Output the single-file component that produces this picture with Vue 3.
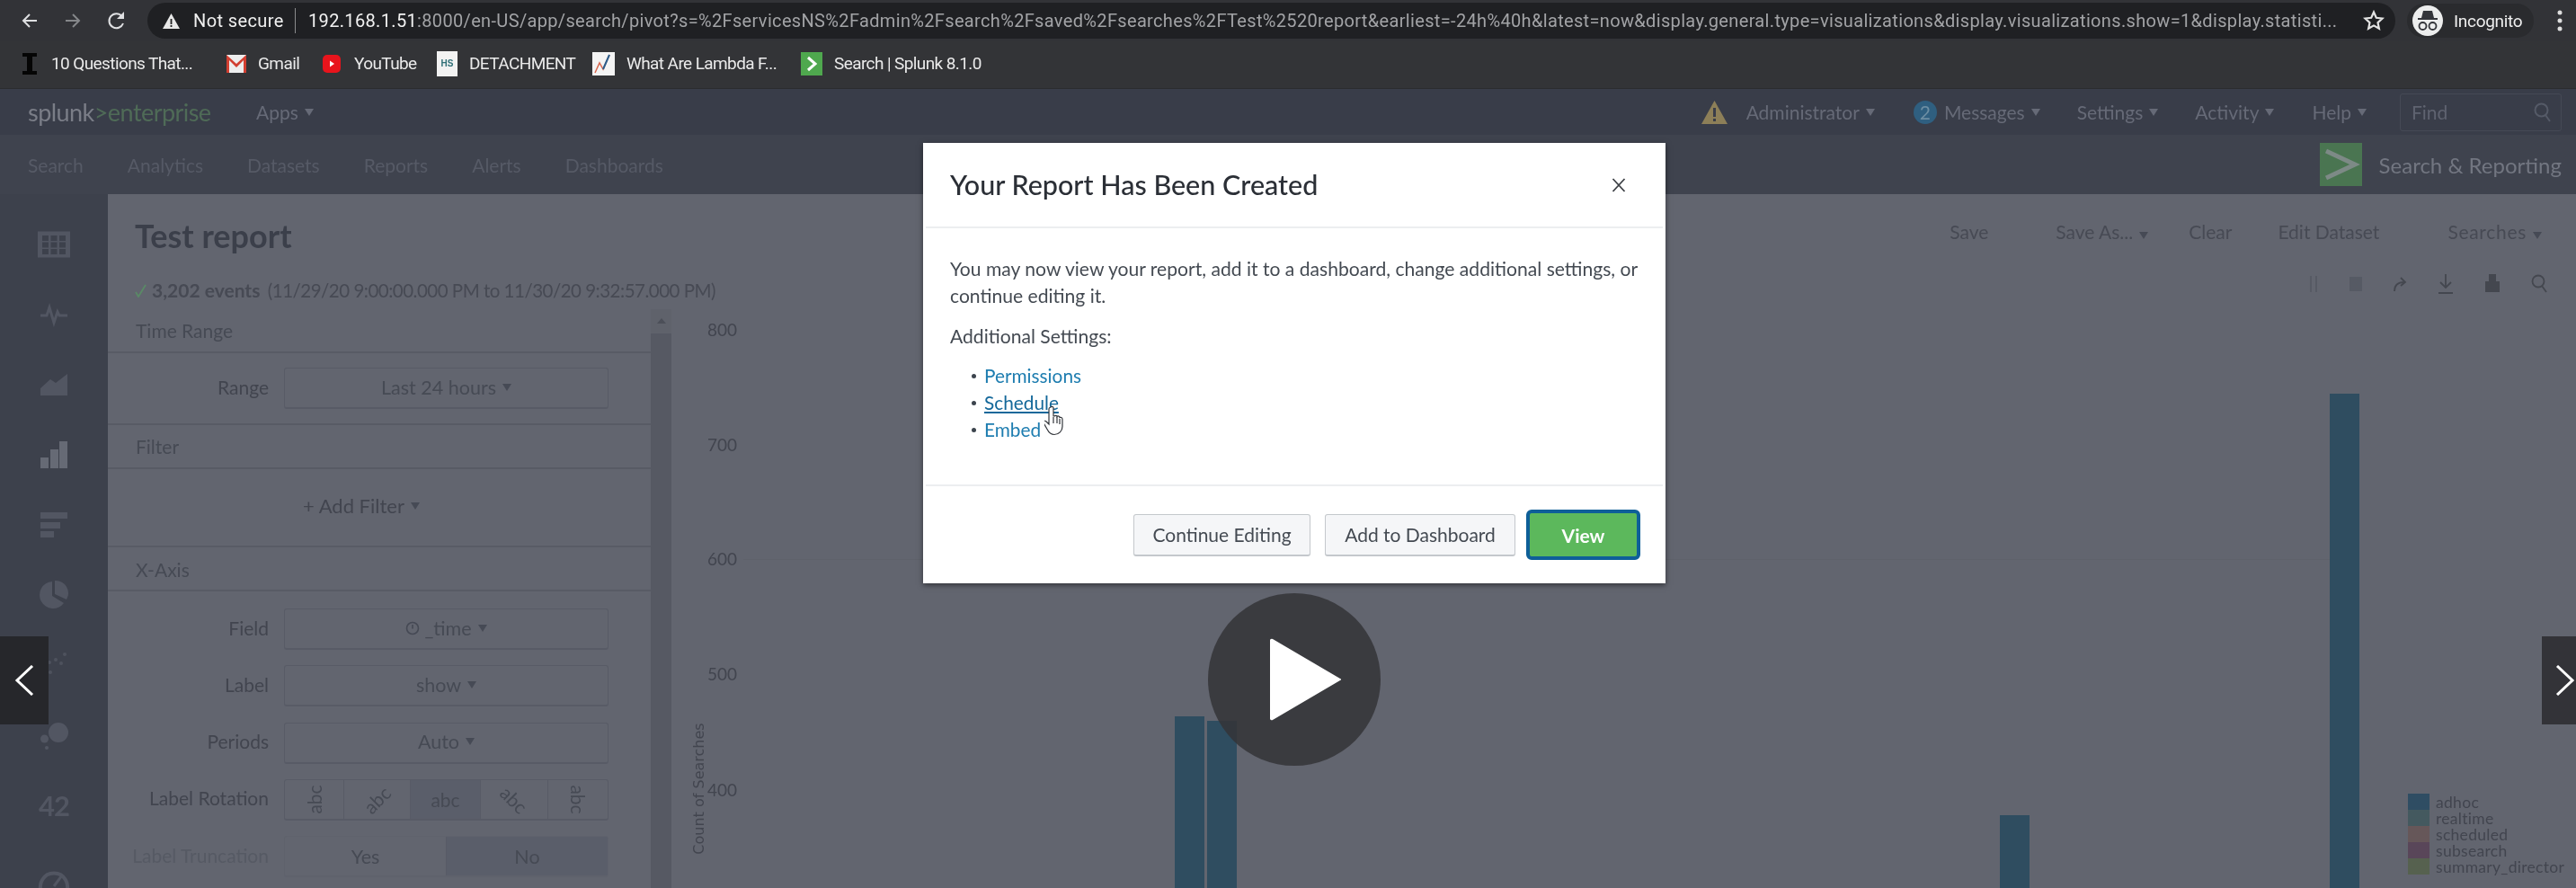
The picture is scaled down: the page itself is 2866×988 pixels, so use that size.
<template>
  <div class="screen">
    <header class="toolbar">
      <svg class="nav-ico" width="20" height="20" viewBox="0 0 20 20"><path d="M18 10H3M10 3l-7 7 7 7" fill="none" stroke="#dfe0e2" stroke-width="2"/></svg>
      <svg class="nav-ico fwd" width="20" height="20" viewBox="0 0 20 20"><path d="M2 10h15M10 3l7 7-7 7" fill="none" stroke="#85878a" stroke-width="2"/></svg>
      <svg class="nav-ico reload" width="22" height="24" viewBox="0 0 22 24"><path d="M18 15a8 8 0 1 1-1.5-8" fill="none" stroke="#dfe0e2" stroke-width="2"/><path d="M19 2v8h-8z" fill="#dfe0e2"/></svg>
      <div class="omnibox">
        <svg width="19" height="17" viewBox="0 0 19 17"><path d="M9.500 0L19 17H0z" fill="#e8e8e8"/><path d="M8.600 6h1.800v6H8.600zM8.600 13h1.800v2H8.600z" fill="#222"/></svg>
        <span class="secure">Not secure</span>
        <i class="omni-sep"></i>
        <span class="url"><b>192.168.1.51</b>:8000/en-US/app/search/pivot?s=%2FservicesNS%2Fadmin%2Fsearch%2Fsaved%2Fsearches%2FTest%2520report&amp;earliest=-24h%40h&amp;latest=now&amp;display.general.type=visualizations&amp;display.visualizations.show=1&amp;display.statisti...</span>
        <svg class="star" width="24" height="24" viewBox="0 0 24 24"><path d="M12 2.500l2.800 6.300 6.700.7-5 4.600 1.400 6.700-5.900-3.400-5.900 3.400 1.400-6.700-5-4.600 6.700-.7z" fill="none" stroke="#e4e4e4" stroke-width="2.200"/></svg>
      </div>
      <div class="incognito">
        <svg width="34" height="34" viewBox="0 0 34 34"><circle cx="17" cy="17" r="17" fill="#eceded"/><path d="M12 6h10l2 8H10zM6 14h22v2H6z" fill="#33353a"/><circle cx="11.500" cy="23" r="4" fill="none" stroke="#33353a" stroke-width="1.800"/><circle cx="22.500" cy="23" r="4" fill="none" stroke="#33353a" stroke-width="1.800"/></svg>
        <span>Incognito</span>
      </div>
      <svg class="dots" width="6" height="26" viewBox="0 0 6 26"><circle cx="3" cy="4" r="2.500" fill="#dedede"/><circle cx="3" cy="13" r="2.500" fill="#dedede"/><circle cx="3" cy="22" r="2.500" fill="#dedede"/></svg>
    </header>

    <nav class="bookmarks">
      <a class="bm" style="margin-left:25px">
        <svg width="16" height="24" viewBox="0 0 16 24"><path d="M0 0h16v4h-5v16h5v4H0v-4h5V4H0z" fill="#050505"/></svg>
        <span class="bm-t" style="width:157px">10 Questions That...</span>
      </a>
      <a class="bm" style="margin-left:38px">
        <svg width="22" height="20" viewBox="0 0 22 20"><rect width="22" height="20" fill="#eee"/><path d="M0 0l11 10L22 0v20h-3V6l-8 8-8-8v14H0z" fill="#d23f31"/></svg>
        <span class="bm-t" style="width:46px">Gmail</span>
      </a>
      <a class="bm" style="margin-left:26px">
        <svg width="20" height="22" viewBox="0 0 20 22"><rect y="1" width="20" height="20" rx="5" fill="#e8141c"/><path d="M8 7.500l5 3.500-5 3.500z" fill="#fff"/></svg>
        <span class="bm-t" style="width:69px;margin-left:2px">YouTube</span>
      </a>
      <a class="bm" style="margin-left:23px">
        <span class="hs">HS</span>
        <span class="bm-t" style="width:113px">DETACHMENT</span>
      </a>
      <a class="bm" style="margin-left:24px">
        <svg width="25" height="26" viewBox="0 0 25 26"><rect width="25" height="26" fill="#f4f4f4"/><path d="M3 23l5-11 4 7 7-16" fill="none" stroke="#d8674e" stroke-width="1.500"/><path d="M12 19l7-16" fill="none" stroke="#2a5d8c" stroke-width="2"/></svg>
        <span class="bm-t" style="width:170px">What Are Lambda F...</span>
      </a>
      <a class="bm" style="margin-left:24px">
        <svg width="24" height="26" viewBox="0 0 24 26"><rect width="24" height="26" fill="#4fa84e"/><path d="M8 6l8 7-8 7" fill="none" stroke="#fff" stroke-width="3"/></svg>
        <span class="bm-t" style="width:164px">Search | Splunk 8.1.0</span>
      </a>
    </nav>

    <div class="splunk-bar">
      <div class="logo">splunk<span>&gt;enterprise</span></div>
      <div class="menu apps">Apps<i class="caret"></i></div>
      <div class="bar-right">
        <svg width="29" height="26" viewBox="0 0 29 26"><path d="M14.500 0L29 26H0z" fill="#8d7f58"/><path d="M13 8h3v10h-3zM13 20h3v3h-3z" fill="#3a3d49"/></svg>
        <div class="menu" style="margin-left:21px">Administrator<i class="caret"></i></div>
        <span class="badge" style="margin-left:43px">2</span>
        <div class="menu" style="margin-left:8px">Messages<i class="caret"></i></div>
        <div class="menu" style="margin-left:41px">Settings<i class="caret"></i></div>
        <div class="menu" style="margin-left:41px">Activity<i class="caret"></i></div>
        <div class="menu" style="margin-left:42px">Help<i class="caret"></i></div>
        <div class="find">
          <span>Find</span>
          <svg width="20" height="22" viewBox="0 0 20 22"><circle cx="8.500" cy="8.500" r="7" fill="none" stroke="#555a67" stroke-width="2"/><path d="M13 14l5 7" stroke="#555a67" stroke-width="2"/></svg>
        </div>
      </div>
    </div>

    <div class="app-bar">
      <a v-for="item in appNav" :key="item">{{ item }}</a>
      <div class="app-name">
        <svg width="47" height="48" viewBox="0 0 47 48"><rect width="47" height="48" fill="#4a7551"/><path d="M7 9l32 15L7 39" fill="none" stroke="#7d8a86" stroke-width="5"/></svg>
        <span>Search &amp; Reporting</span>
      </div>
    </div>

    <div class="workspace">
      <aside class="viz-rail">
        <div class="viz-item" v-for="(ico, i) in railIcons" :key="i">
          <svg v-if="ico !== '42'" width="36" height="36" viewBox="0 0 36 36" v-html="ico"></svg>
          <span v-else class="forty-two">42</span>
        </div>
      </aside>

      <main class="page">
        <div class="page-head">
          <div class="title-row">
            <h1>Test report</h1>
            <div class="actions">
              <span style="width:44px">Save</span>
              <span style="margin-left:74px">Save As...<i class="caret dark"></i></span>
              <span style="margin-left:45px">Clear</span>
              <span style="margin-left:51px">Edit Dataset</span>
              <span class="searches">Searches<i class="caret dark"></i></span>
            </div>
          </div>
          <div class="status-row">
            <p class="status">
              <svg width="13" height="15" viewBox="0 0 13 15"><path d="M1 9l3 5 8-13" fill="none" stroke="#5a8a66" stroke-width="1.800"/></svg>
              <b>3,202 events</b> <span class="range">(11/29/20 9:00:00.000 PM to 11/30/20 9:32:57.000 PM)</span>
            </p>
            <div class="tools">
              <svg width="12" height="20" viewBox="0 0 12 20"><path d="M2 1h2v18H2zM8 1h2v18H8z" fill="#565a64"/></svg>
              <svg width="14" height="20" viewBox="0 0 14 20"><rect y="2" width="14" height="16" fill="#565a64"/></svg>
              <svg width="16" height="20" viewBox="0 0 16 20"><path d="M2 18c0-6 3-10 11-10M9 3l5 5-5 4" fill="none" stroke="#44474f" stroke-width="1.800"/></svg>
              <svg width="18" height="24" viewBox="0 0 18 24"><path d="M9 1v15M3 10l6 6 6-6M1 22h16" fill="none" stroke="#44474f" stroke-width="1.800"/></svg>
              <svg width="18" height="24" viewBox="0 0 18 24"><path d="M5 1h8v8h4v12H1V9h4z" fill="#44474f"/></svg>
              <svg width="18" height="24" viewBox="0 0 18 24"><circle cx="8" cy="9" r="6.500" fill="none" stroke="#44474f" stroke-width="1.800"/><path d="M12 14l5 7" stroke="#44474f" stroke-width="1.800"/></svg>
            </div>
          </div>
        </div>

        <div class="page-body">
          <section class="config">
            <h3>Time Range</h3>
            <div class="group g-range">
              <div class="frow"><label>Range</label><div class="ctl">Last 24 hours<i class="caret dark"></i></div></div>
            </div>
            <h3>Filter</h3>
            <div class="group g-filter"><span class="add">+ Add Filter<i class="caret dark"></i></span></div>
            <h3 class="axis-head">X-Axis</h3>
            <div class="group g-axis">
              <div class="frow">
                <label>Field</label>
                <div class="ctl">
                  <svg width="16" height="16" viewBox="0 0 16 16"><circle cx="8" cy="8" r="6.500" fill="none" stroke="#454954" stroke-width="1.600"/><path d="M8 4v4.500h0" stroke="#454954" stroke-width="1.600"/></svg>
                  <span style="margin-left:5px">_time</span><i class="caret dark"></i>
                </div>
              </div>
              <div class="frow"><label>Label</label><div class="ctl">show<i class="caret dark"></i></div></div>
              <div class="frow"><label>Periods</label><div class="ctl">Auto<i class="caret dark"></i></div></div>
              <div class="frow">
                <label>Label Rotation</label>
                <div class="ctl seg">
                  <span v-for="r in rotations" :key="r.deg" :class="{ on: r.deg === 0 }" :style="{ width: r.w + 'px' }">
                    <i :style="{ transform: `rotate(${r.deg}deg)` }">abc</i>
                  </span>
                </div>
              </div>
              <div class="frow">
                <label class="faded">Label Truncation</label>
                <div class="ctl seg flat">
                  <span style="width:181px">Yes</span>
                  <span class="on" style="width:180px">No</span>
                </div>
              </div>
            </div>
          </section>

          <div class="scroll">
            <svg width="12" height="8" viewBox="0 0 12 8"><path d="M6 1l5 6H1z" fill="#4c4f58"/></svg>
            <i></i>
          </div>

          <section class="chart">
            <span v-for="t in ticks" :key="t.label" class="tick-label" :style="{ top: t.top + 'px' }">{{ t.label }}</span>
            <i class="gridline"></i>
            <span class="y-title">Count of Searches</span>
            <i v-for="(b, i) in bars" :key="i" class="bar" :style="{ left: b.x + 'px', top: b.y + 'px', width: b.w + 'px' }"></i>
            <ul class="legend">
              <li v-for="l in legend" :key="l.name"><i :style="{ background: l.color }"></i>{{ l.name }}</li>
            </ul>
          </section>
        </div>
      </main>
    </div>

    <!-- dialog -->
    <div class="modal">
      <div class="modal-head">
        <h2>Your Report Has Been Created</h2>
        <svg class="close" width="16" height="18" viewBox="0 0 16 18"><path d="M1.500 2l13 14M14.500 2l-13 14" stroke="#3c3f44" stroke-width="1.800"/></svg>
      </div>
      <div class="modal-body">
        <p>You may now view your report, add it to a dashboard, change additional settings, or continue editing it.</p>
        <p class="addl">Additional Settings:</p>
        <ul>
          <li><a>Permissions</a></li>
          <li><a class="hover">Schedule</a></li>
          <li><a>Embed</a></li>
        </ul>
      </div>
      <div class="modal-foot">
        <button class="btn" style="width:197px">Continue Editing</button>
        <button class="btn" style="width:212px">Add to Dashboard</button>
        <button class="btn primary">View</button>
      </div>
      <svg class="hand" width="22" height="34" viewBox="0 0 22 34"><path d="M7 2c1.500-1.500 3 0 3 1v9l1 0c1-1 3-1 3 .5 1-1 3-.5 3 1 1-.5 3 0 3 2v8c0 5-4 9-9 9-4 0-6-2-8-6l-4-7c-.5-2 1.500-3 3-1.500l3 3V4c0-1 .5-1.500 2-2z" fill="#fff" stroke="#33363b" stroke-width="1.200"/><path d="M10 13v7M14 13v7M17 15v6" stroke="#33363b" stroke-width="1.200"/></svg>
    </div>

    <!-- video player controls -->
    <div class="play">
      <svg width="80" height="92" viewBox="0 0 80 92"><path d="M3 1l75 44a1 1 0 0 1 0 2L3 91a2 2 0 0 1-3-2V3a2 2 0 0 1 3-2z" fill="#fff"/></svg>
    </div>
    <div class="side prev"><svg width="22" height="34" viewBox="0 0 22 34"><path d="M20 1L3 17l17 16" fill="none" stroke="#fff" stroke-width="3"/></svg></div>
    <div class="side next"><svg width="22" height="34" viewBox="0 0 22 34"><path d="M2 1l17 16L2 33" fill="none" stroke="#fff" stroke-width="3"/></svg></div>
  </div>
</template>

<script setup>
const appNav = ['Search', 'Analytics', 'Datasets', 'Reports', 'Alerts', 'Dashboards']

const railIcons = [
  '<rect x="0" y="3.500" width="36" height="29" fill="#525662"/><path d="M5 8h7v6H5zM14.500 8h7v6h-7zM24 8h7v6h-7zM5 15.500h7v6H5zM14.500 15.500h7v6h-7zM24 15.500h7v6h-7zM5 23h7v6H5zM14.500 23h7v6h-7zM24 23h7v6h-7z" fill="#3d414c"/>',
  '<path d="M3 19h7l3-9 5 17 4-12 2 4h9" fill="none" stroke="#525662" stroke-width="3"/>',
  '<path d="M3 30v-8l11-10 6 4L33 6v24z" fill="#525662"/>',
  '<path d="M3 21h9v12H3zM14 12h9v21h-9zM24 3h9v30h-9z" fill="#666a75"/>',
  '<path d="M3 4h30v7H3zM3 15h22v7H3zM3 25h15v7H3z" fill="#525662"/>',
  '<path d="M16 3v16l13 8A15 15 0 1 1 16 3zM19 2a14 14 0 0 1 13 21l-13-6z" fill="#525662"/>',
  '<g fill="#4e525e"><circle cx="30" cy="6" r="2"/><circle cx="20" cy="12" r="2"/><circle cx="13" cy="15" r="2"/><circle cx="26" cy="16" r="2"/><circle cx="14" cy="26" r="2"/></g>',
  '<circle cx="23" cy="15" r="11" fill="#525662"/><circle cx="7.500" cy="22" r="4.500" fill="#525662"/><circle cx="10" cy="32" r="2" fill="#525662"/>',
  '42',
  '<g class="gauge"><path d="M5 38A15 15 0 1 1 31 38" fill="none" stroke="#525662" stroke-width="4"/><path d="M18 30L27 18" stroke="#525662" stroke-width="3"/></g>'
]

const rotations = [
  { deg: -90, w: 66 },
  { deg: -45, w: 75 },
  { deg: 0, w: 78 },
  { deg: 45, w: 76 },
  { deg: 90, w: 66 }
]

const ticks = [
  { label: '800', top: 11 },
  { label: '700', top: 139 },
  { label: '600', top: 266 },
  { label: '500', top: 394 },
  { label: '400', top: 523 }
]

const bars = [
  { x: 560, y: 453, w: 33 },
  { x: 596, y: 458, w: 33 },
  { x: 1478, y: 563, w: 33 },
  { x: 1845, y: 94, w: 33 }
]

const legend = [
  { name: 'adhoc', color: '#2f4d63' },
  { name: 'realtime', color: '#44595f' },
  { name: 'scheduled', color: '#665759' },
  { name: 'subsearch', color: '#594659' },
  { name: 'summary_director', color: '#56614f' }
]
</script>

<style>
html, body { margin: 0; background: #62656f; }
</style>

<style scoped>
.screen {
  position: relative;
  width: 2866px;
  height: 988px;
  overflow: hidden;
  font-family: Lato, "Open Sans", sans-serif;
  display: flex;
  flex-direction: column;
  background: #62656f;
  filter: blur(0.6px);
}
.toolbar {
  height: 46px;
  flex: none;
  background: #323337;
  display: flex;
  align-items: center;
  box-sizing: border-box;
  padding: 0 0 0 23px;
}
.nav-ico { flex: none; }
.fwd { margin-left: 28px; }
.reload { margin-left: 28px; }
.omnibox {
  margin-left: 23px;
  width: 2501px;
  height: 40px;
  flex: none;
  border-radius: 20px;
  background: #1f2023;
  display: flex;
  align-items: center;
  box-sizing: border-box;
  padding-left: 17px;
  font-family: Roboto, sans-serif;
  font-size: 20px;
  color: #f0f0f0;
  white-space: nowrap;
}
.secure { margin-left: 15px; letter-spacing: 0.4px; width: 101px; }
.omni-sep { width: 1px; height: 28px; background: #8a8b8d; margin: 0 14px 0 12px; }
.url { color: #a2a3a6; width: 2266px; flex: none; letter-spacing: 0.34px; overflow: hidden; }
.url b { color: #f2f2f2; font-weight: 400; }
.star { margin-left: 20px; flex: none; }
.incognito {
  margin-left: 13px;
  width: 141px;
  height: 38px;
  flex: none;
  border-radius: 19px;
  background: #2a2b2e;
  display: flex;
  align-items: center;
  box-sizing: border-box;
  padding-left: 6px;
  font-family: Roboto, sans-serif;
  font-size: 19px;
  color: #eee;
  letter-spacing: -0.3px;
}
.incognito span { margin-left: 12px; }
.dots { margin-left: 26px; flex: none; }

.bookmarks {
  height: 53px;
  flex: none;
  background: #333437;
  display: flex;
  align-items: center;
  box-sizing: border-box;
  padding-bottom: 3px;
  border-bottom: 1px solid #2b2c2f;
}
.bm { display: flex; align-items: center; gap: 13px; }
.bm svg { flex: none; }
.bm:first-child { gap: 16px; }
.bm-t {
  font-family: Roboto, sans-serif;
  font-size: 19px;
  color: #eaeaea;
  white-space: nowrap;
  letter-spacing: -0.6px;
}
.hs {
  width: 23px;
  height: 28px;
  background: #f2f2f2;
  color: #2f6f77;
  font: 700 10px "Liberation Sans", sans-serif;
  display: flex;
  align-items: center;
  justify-content: center;
}

.splunk-bar {
  height: 51px;
  flex: none;
  background: #393d49;
  display: flex;
  align-items: center;
  color: #666a77;
  box-sizing: border-box;
  padding: 0 16px 0 31px;
}
.logo { font-size: 27px; letter-spacing: -0.55px; color: #7a7d87; width: 254px; font-weight: 400; }
.logo span { color: #4f6b57; font-weight: 400; }
.menu { font-size: 21px; white-space: nowrap; display: flex; align-items: center; }
.caret {
  display: inline-block;
  width: 0;
  height: 0;
  border: 5px solid transparent;
  border-top: 8px solid #666a77;
  border-bottom: 0;
  margin-left: 7px;
}
.caret.dark { border-top-color: #464a55; }
.bar-right { margin-left: auto; display: flex; align-items: center; }
.badge {
  width: 26px;
  height: 26px;
  border-radius: 50%;
  background: #2f5f80;
  color: #6d8ea3;
  font-size: 21px;
  display: flex;
  align-items: center;
  justify-content: center;
}
.find {
  margin-left: 37px;
  width: 180px;
  height: 42px;
  box-sizing: border-box;
  border: 1px solid #454955;
  border-radius: 3px;
  display: flex;
  align-items: center;
  justify-content: space-between;
  padding: 0 10px 0 12px;
  font-size: 21px;
  color: #5f6370;
}

.app-bar {
  height: 66px;
  flex: none;
  background: #3f434e;
  display: flex;
  align-items: center;
  gap: 49px;
  padding: 0 16px 0 31px;
  box-sizing: border-box;
  color: #565a66;
  font-size: 21px;
}
.app-name {
  margin-left: auto;
  display: flex;
  align-items: center;
  gap: 19px;
  font-size: 24px;
  color: #727681;
}

.workspace { flex: 1; display: flex; min-height: 0; }
.viz-rail {
  width: 120px;
  flex: none;
  background: #3d414c;
  padding-top: 17px;
  box-sizing: border-box;
}
.viz-item { height: 78px; display: flex; align-items: center; justify-content: center; }
.viz-item svg { overflow: visible; }
.forty-two { font-size: 31px; font-weight: 700; color: #525662; letter-spacing: -1px; }

.page { flex: 1; min-width: 0; display: flex; flex-direction: column; }
.page-head { height: 128px; flex: none; box-sizing: border-box; padding: 20px 38px 0 30px; }
.title-row { display: flex; align-items: center; justify-content: space-between; height: 52px; }
h1 { margin: 0; font-size: 36px; font-weight: 700; color: #3b3f4a; }
.actions { display: flex; font-size: 21px; color: #474a54; white-space: nowrap; align-items: center; margin-bottom: 9px; }
.searches { margin-left: 76px; letter-spacing: 0.7px; }
.status-row { display: flex; align-items: center; justify-content: space-between; margin-top: 20px; height: 28px; }
.status { margin: 0; font-size: 21px; color: #474a54; white-space: nowrap; }
.status b { font-weight: 700; margin-left: 6px; }
.range { font-size: 20.500px; letter-spacing: -0.5px; margin-left: 3px; }
.tools { display: flex; gap: 34px; align-items: center; margin: 0 -6px 12px 0; }

.page-body { flex: 1; display: flex; min-height: 0; }
.config { width: 604px; flex: none; font-size: 21px; color: #42454f; }
h3 {
  margin: 0;
  height: 49px;
  line-height: 48px;
  font-size: 21px;
  font-weight: 400;
  color: #464a54;
  padding-left: 31px;
  box-sizing: border-box;
  border-bottom: 2px solid #585b65;
}
.axis-head { line-height: 50px; }
.group { box-sizing: border-box; border-bottom: 2px solid #585b65; }
.g-range { height: 80px; padding-top: 16px; }
.g-filter { height: 87px; display: flex; align-items: center; padding: 0 0 4px 217px; }
.add { font-size: 22px; display: flex; align-items: center; }
.g-axis { padding-top: 19px; border-bottom: 0; display: flex; flex-direction: column; gap: 17.300px; }
.frow { display: flex; align-items: center; height: 46px; }
.frow label { width: 179px; text-align: right; margin: -4px 17px 0 0; white-space: nowrap; flex: none; font-size: 21px; }
.faded { color: #565a64; }
.ctl {
  width: 361px;
  height: 46px;
  flex: none;
  box-sizing: border-box;
  border: 1px solid #585b66;
  border-bottom-width: 2px;
  border-radius: 3px;
  display: flex;
  align-items: center;
  justify-content: center;
  padding-bottom: 2px;
  font-size: 21.500px;
  color: #464a54;
}
.seg { justify-content: flex-start; overflow: hidden; padding-bottom: 0; }
.seg span {
  height: 100%;
  box-sizing: border-box;
  border-right: 1px solid #585b66;
  display: flex;
  align-items: center;
  justify-content: center;
}
.seg span:last-child { border-right: 0; }
.seg span.on { background: #5a5e6a; }
.seg i { font-style: normal; font-size: 21px; display: block; }
.flat { border-color: #5f626c; }

.scroll { width: 23px; flex: none; background: #5f626b; position: relative; text-align: center; padding-top: 9px; box-sizing: border-box; }
.scroll svg { display: block; margin: 0 auto; }
.scroll i { position: absolute; left: 0; right: 0; top: 27px; bottom: 0; background: #565963; }

.chart { flex: 1; position: relative; }
.tick-label { position: absolute; left: 40px; font-size: 19px; line-height: 24px; color: #42454f; }
.gridline { position: absolute; left: 80px; right: 270px; top: 278px; height: 1px; background: #5f626b; }
.y-title {
  position: absolute;
  left: 30px;
  top: 524px;
  font-family: "DejaVu Sans", sans-serif;
  font-size: 16px;
  color: #42454f;
  white-space: nowrap;
  transform: translateX(-50%) rotate(-90deg);
}
.bar { position: absolute; bottom: 0; background: #2f4d60; }
.legend { position: absolute; left: 1932px; top: 539px; margin: 0; padding: 0; list-style: none; }
.legend li { display: flex; align-items: center; height: 18px; font-size: 17.500px; color: #42454f; white-space: nowrap; letter-spacing: 0.3px; }
.legend i { width: 24px; height: 18px; margin-right: 7px; flex: none; }

.modal {
  position: absolute;
  left: 1027px;
  top: 159px;
  width: 826px;
  height: 490px;
  background: #fff;
  box-shadow: 0 2px 6px rgba(0, 0, 0, 0.5);
  display: flex;
  flex-direction: column;
  color: #444a52;
}
.modal-head {
  height: 95px;
  flex: none;
  border-bottom: 2px solid #eceef0;
  box-sizing: border-box;
  display: flex;
  align-items: center;
  justify-content: space-between;
  margin: 0 3px;
  padding: 0 41px 2px 27px;
}
.close { margin-top: 3px; }
h2 { margin: 0; font-size: 30.500px; font-weight: 500; color: #2b2f36; }
.modal-body { flex: 1; padding: 30px 24px 0 30px; font-size: 21.100px; line-height: 30px; }
.modal-body p { margin: 0; }
.addl { margin-top: 15px !important; }
.modal-body ul { margin: 14px 0 0; padding: 0 0 0 24px; list-style: none; font-size: 20.800px; }
.modal-body li { display: flex; align-items: center; }
.modal-body li::before {
  content: "";
  width: 5px;
  height: 5px;
  border-radius: 50%;
  background: #3c444d;
  margin-right: 9px;
}
.modal-body a { color: #1e7db0; }
.modal-body a.hover { text-decoration: underline; color: #14689a; }
.modal-foot {
  height: 110px;
  flex: none;
  margin: 0 3px;
  border-top: 2px solid #eceef0;
  box-sizing: border-box;
  display: flex;
  align-items: center;
  justify-content: flex-end;
  gap: 16px;
  padding-right: 25px;
}
.btn {
  height: 47px;
  box-sizing: border-box;
  border: 1px solid #c4c8cc;
  border-bottom-width: 2px;
  border-radius: 3px;
  background: #f5f6f8;
  font-family: inherit;
  font-size: 21px;
  color: #444a52;
  padding: 0;
}
.btn.primary {
  width: 127px;
  height: 56px;
  margin-left: -4px;
  background: #5cb85c;
  border: 4px solid #0e5f98;
  border-radius: 6px;
  color: #fff;
  font-weight: 700;
}
.hand { position: absolute; left: 135px; top: 292px; }

.play {
  position: absolute;
  left: 1344px;
  top: 660px;
  width: 192px;
  height: 192px;
  border-radius: 50%;
  background: rgba(52, 52, 55, 0.85);
  display: flex;
  align-items: center;
  justify-content: center;
}
.play svg { margin-left: 26px; }
.side {
  position: absolute;
  top: 708px;
  height: 98px;
  display: flex;
  align-items: center;
}
.prev { left: 0; width: 54px; background: #26272b; padding-left: 16px; box-sizing: border-box; }
.next { right: 0; width: 38px; background: #333338; padding-left: 15px; box-sizing: border-box; }
</style>
